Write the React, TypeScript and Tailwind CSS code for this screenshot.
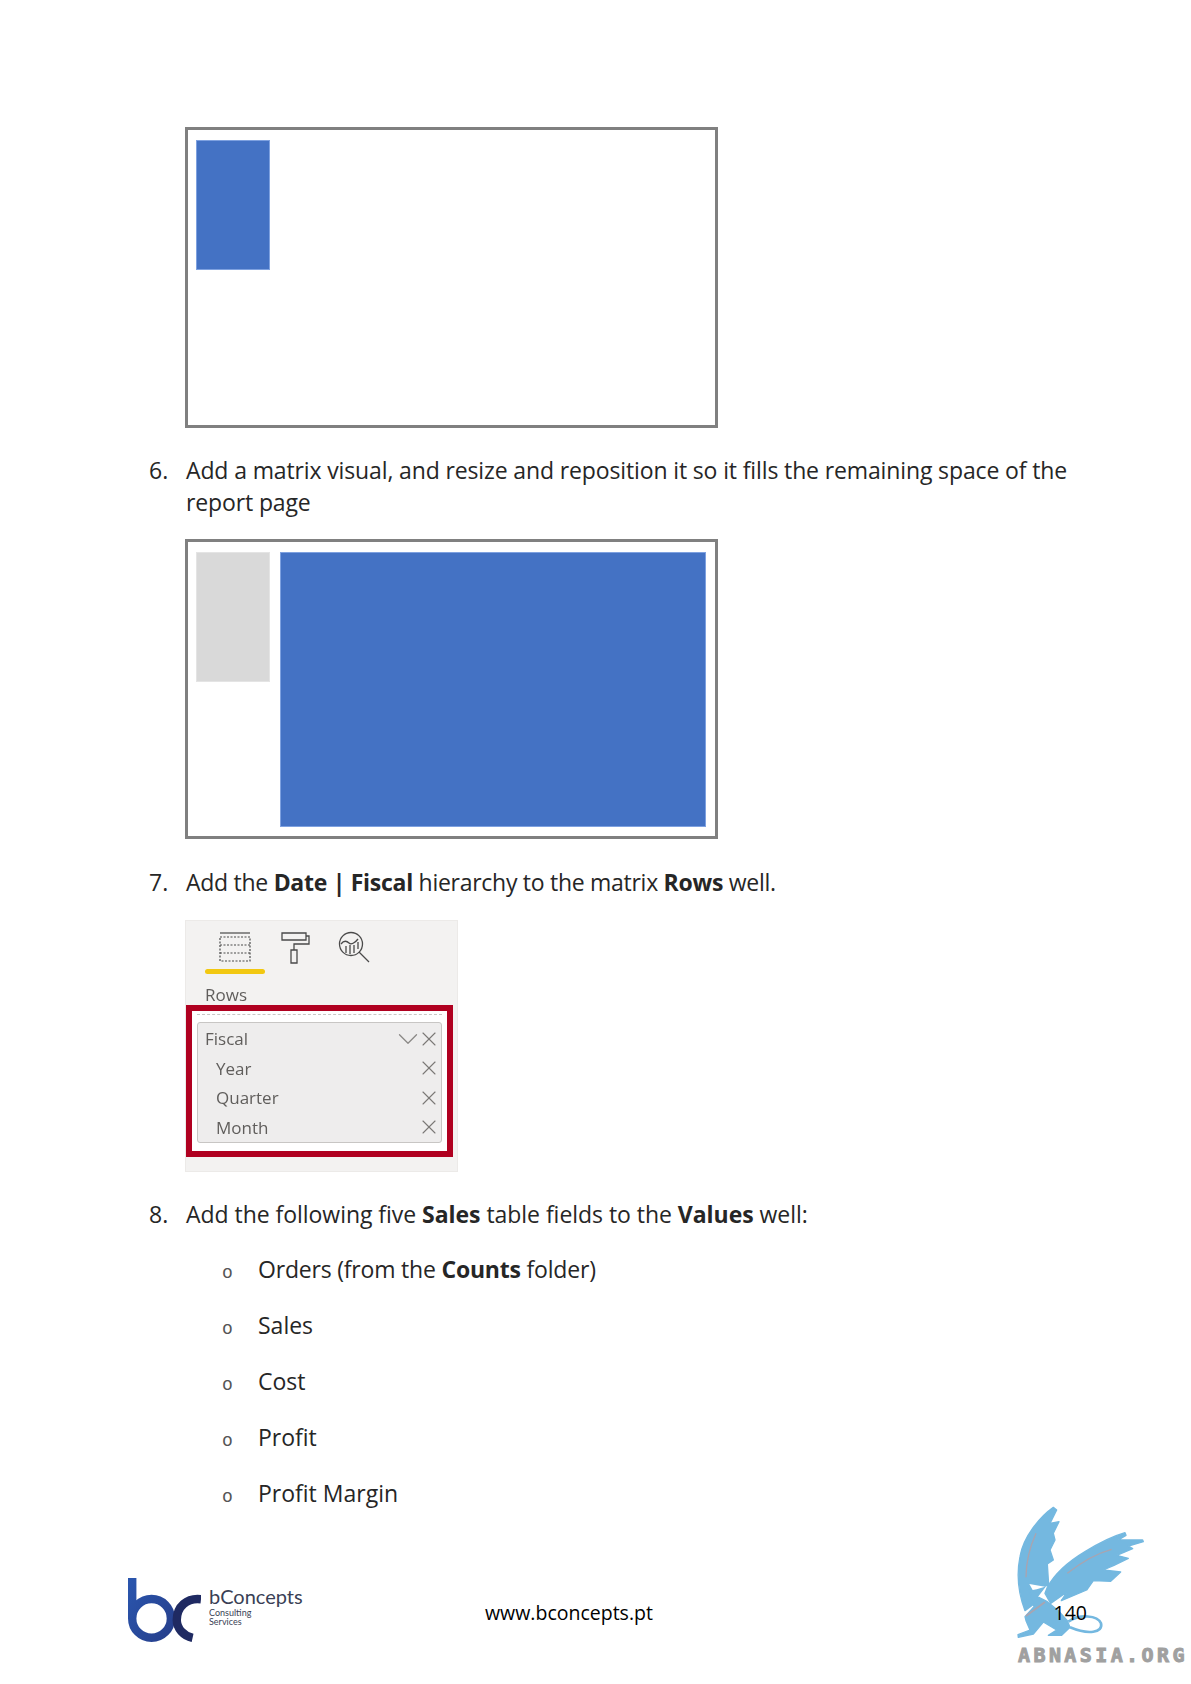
import React from 'react'
import { X, ChevronDown } from 'lucide-react'

const body = "font-['Open_Sans','Noto_Sans',sans-serif]"

function ReportBox({ tall, children }: { tall?: boolean; children: React.ReactNode }) {
  return (
    <div className={`ml-[185px] flex w-[533px] items-start gap-[10px] border-[3px] border-[#808080] bg-white pt-[10px] pl-[8px] pr-[9px] ${tall ? 'h-[301px]' : 'h-[300px]'}`}>
      {children}
    </div>
  )
}

function Step({ n, tracking, children }: { n: string; tracking: string; children: React.ReactNode }) {
  return (
    <div className="ml-[149px] flex w-[930px] text-[23px] leading-[32px] text-[#262626]">
      <span className="w-[37px] shrink-0">{n}</span>
      <p className={tracking}>{children}</p>
    </div>
  )
}

function Bullet({ children, tracking }: { children: React.ReactNode; tracking?: string }) {
  return (
    <li className="flex h-[56px] items-center text-[23px] text-[#262626]">
      <span className="ml-[222px] w-[36px] shrink-0 pt-[9px] font-['Liberation_Mono',monospace] text-[18px] text-[#555555]">o</span>
      <span className={tracking}>{children}</span>
    </li>
  )
}

function FieldRow({ label, indent, chevron }: { label: string; indent?: boolean; chevron?: boolean }) {
  return (
    <div className={`flex h-[29.5px] items-center text-[17px] text-[#605e5c] ${indent ? 'pl-[18px]' : 'pl-[7px]'}`}>
      <span className="flex-1">{label}</span>
      {chevron && <ChevronDown className="-my-[4px] -mr-[8px] h-[34px] w-[34px] text-[#8a8886]" strokeWidth={0.9} />}
      <X className="h-[24px] w-[24px] text-[#7a7876]" strokeWidth={1.1} />
    </div>
  )
}

function RowsPane() {
  return (
    <div className="ml-[185px] h-[252px] w-[273px] border border-[#eceae8] bg-[#f3f2f1] blur-[0.4px]">
      <div className="flex h-[48px] gap-[28px] pl-[32px] pt-[10px] text-[#4a4a4a]">
        <svg width="34" height="34" viewBox="0 0 34 34" fill="none" stroke="currentColor" strokeWidth="1.2">
          <path d="M2 2h30" />
          <path d="M2 6h30v24H2z" strokeDasharray="2 1.5" />
          <path d="M2 14h30M2 22h30" strokeDasharray="2 1.5" />
        </svg>
        <svg width="30" height="34" viewBox="0 0 30 34" fill="none" stroke="currentColor" strokeWidth="1.3">
          <path d="M2 2h24v7H2z" />
          <path d="M26 5h3v8H14v6" />
          <path d="M11 19h6v13h-6z" />
        </svg>
        <svg width="34" height="34" viewBox="0 0 34 34" fill="none" stroke="currentColor" strokeWidth="1.3">
          <circle cx="13" cy="13" r="11.5" />
          <path d="M21 21l10 10" />
          <path d="M3 13c3-4 6-3 8-1s6 0 9-4" />
          <path d="M8 15v7M12 14v9M16 14v8M20 11v7" />
        </svg>
      </div>
      <div className="ml-[19px] h-[5px] w-[60px] rounded-full bg-[#f2c811]" />
      <div className="ml-[19px] mt-[11px] text-[17px] leading-[20px] text-[#605e5c]">Rows</div>
      <div className="h-[152px] w-[267px] border-[6px] border-[#b00020] bg-white px-[5px] pt-[3px]">
        <div className="border-t border-dashed border-[#c8c6c4]" />
        <div className="mt-[7px] h-[121px] rounded-[3px] border border-[#c8c6c4] bg-[#eeeded] pt-[1px]">
          <FieldRow label="Fiscal" chevron />
          <FieldRow label="Year" indent />
          <FieldRow label="Quarter" indent />
          <FieldRow label="Month" indent />
        </div>
      </div>
    </div>
  )
}

function BcLogo() {
  return (
    <svg width="73" height="64" viewBox="0 0 217 190" fill="none" className="-mt-[1px] shrink-0 self-start">
      <defs>
        <linearGradient id="bcBlue" x1="0" y1="0" x2="1" y2="1">
          <stop offset="0" stopColor="#2a55ad" />
          <stop offset="1" stopColor="#263f8c" />
        </linearGradient>
      </defs>
      <path d="M12.5 0V120a57.5 57.5 0 1 0 57.5-57.5a57.5 57.5 0 0 0-57.5 57.5" stroke="url(#bcBlue)" strokeWidth="25" />
      <path d="M217 63C175 58 145 85 145 125C145 150 165 172 192 178" stroke="#1f2a62" strokeWidth="25" />
    </svg>
  )
}

function Griffin() {
  return (
    <svg className="absolute left-[990px] top-[1490px]" width="201" height="194" viewBox="0 0 603 582">
      <g fill="#74b8e0" stroke="#74b8e0" strokeWidth="4" strokeLinejoin="round">
        <path d="M105 362C85 310 80 250 90 200C100 140 150 80 190 52L200 60L180 100L207 95L190 130L195 150L180 180L190 210L172 222L176 285L150 292L118 290L135 340Z" />
        <path d="M172 292C195 250 235 215 285 185C325 160 370 138 405 128L408 136L385 150L458 150L460 155L415 168L428 176L380 196L415 205L372 226L340 240L392 246L362 274L310 272L290 300L214 332L232 305L182 340L165 310Z" />
        <path d="M105 380L132 350L115 290L140 282L165 290L142 320L172 335L205 362L232 392L240 412L215 436L175 436L200 420L160 396L130 432L85 442L84 434L120 420L108 392Z" />
      </g>
      <path d="M235 395C270 372 322 375 333 400C340 428 295 435 240 412" fill="none" stroke="#74b8e0" strokeWidth="8" />
      <path d="M108 378L165 336" stroke="#a9a4b0" strokeWidth="5" />
      <path d="M108 262C108 210 120 170 138 130" stroke="#a9a4b0" strokeWidth="4" fill="none" />
      <path d="M232 250C270 220 320 190 365 178" stroke="#a9a4b0" strokeWidth="4" fill="none" />
      <path d="M118 282L165 290L140 298L128 300Z" fill="#fff" />
    </svg>
  )
}

export default function App() {
  return (
    <div className={`${body} relative h-[1684px] w-[1191px] overflow-hidden bg-white pt-[127px]`}>
      <ReportBox tall>
        <div className="h-[130px] w-[74px] border border-[#7ea1e0] bg-[#4472c4]" />
      </ReportBox>

      <div className="mt-[26px]">
        <Step n="6." tracking="tracking-[-0.13px]">Add a matrix visual, and resize and reposition it so it fills the remaining space of the report page</Step>
      </div>

      <div className="mt-[21px]">
        <ReportBox>
          <div className="h-[130px] w-[74px] border border-[#e4e4e4] bg-[#d9d9d9]" />
          <div className="h-[275px] flex-1 border border-[#7ea1e0] bg-[#4472c4]" />
        </ReportBox>
      </div>

      <div className="mt-[27px]">
        <Step n="7." tracking="tracking-[-0.28px]">Add the <b>Date | Fiscal</b> hierarchy to the matrix <b>Rows</b> well.</Step>
      </div>

      <div className="mt-[22px]">
        <RowsPane />
      </div>

      <div className="mt-[26px]">
        <Step n="8." tracking="tracking-[-0.04px]">Add the following five <b>Sales</b> table fields to the <b>Values</b> well:</Step>
      </div>

      <ul className="mt-[11px]">
        <Bullet tracking="tracking-[-0.2px]">Orders (from the <b>Counts</b> folder)</Bullet>
        <Bullet>Sales</Bullet>
        <Bullet>Cost</Bullet>
        <Bullet>Profit</Bullet>
        <Bullet>Profit Margin</Bullet>
      </ul>

      <Griffin />

      <footer className="mt-[58px] ml-[128px] flex h-[68px] w-[959px] items-center">
        <BcLogo />
        <div className="ml-[8px] w-[276px] self-start pt-[5px] text-[#3a3f55]">
          <div className="font-['Lato',sans-serif] text-[20px] leading-[24px]">bConcepts</div>
          <div className="font-['Lato',sans-serif] text-[9px] leading-[9px]">Consulting</div>
          <div className="font-['Lato',sans-serif] text-[9px] leading-[9px]">Services</div>
        </div>
        <div className="flex-1 text-[19.5px] text-black">www.bconcepts.pt</div>
        <div className="relative text-[19.5px] text-black">140</div>
      </footer>

      <div className="absolute left-[1018px] top-[1641px] font-['DejaVu_Sans_Mono',monospace] text-[20px] leading-[28px] font-bold tracking-[3.4px] text-[#a0a0a0] [-webkit-text-stroke:1px_#a0a0a0]">
        ABNASIA.ORG
      </div>
    </div>
  )
}
